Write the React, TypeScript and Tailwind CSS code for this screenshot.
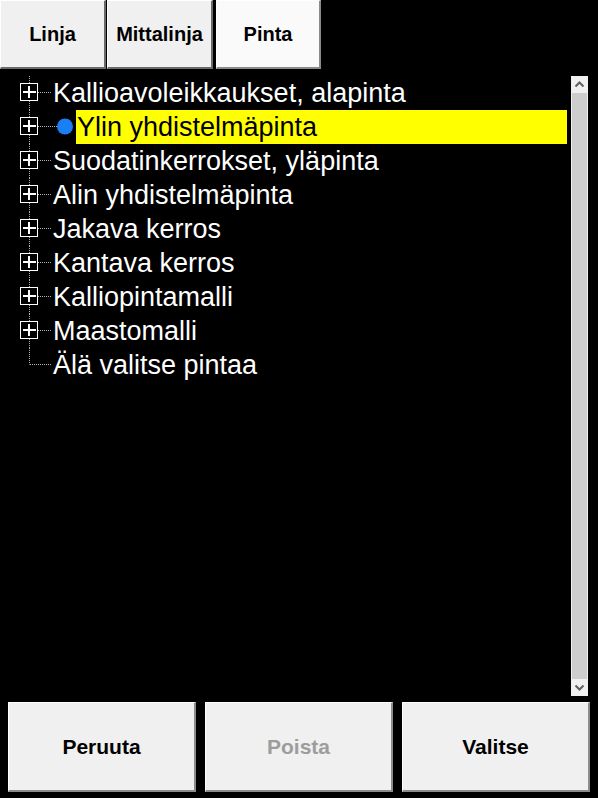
import React from "react";

const items = [
  { label: "Kallioavoleikkaukset, alapinta", box: true },
  { label: "Ylin yhdistelmäpinta", box: true, selected: true },
  { label: "Suodatinkerrokset, yläpinta", box: true },
  { label: "Alin yhdistelmäpinta", box: true },
  { label: "Jakava kerros", box: true },
  { label: "Kantava kerros", box: true },
  { label: "Kalliopintamalli", box: true },
  { label: "Maastomalli", box: true },
  { label: "Älä valitse pintaa", box: false, last: true },
];

const LINE = "#b0b0b0";

function Connector({ box, last, selected }: { box: boolean; last?: boolean; selected?: boolean }) {
  const w = selected ? 76 : 53;
  return (
    <svg width={w} height={34} className="shrink-0 block">
      {box ? (
        <>
          <line x1={29.5} y1={0} x2={29.5} y2={8} stroke={LINE} strokeDasharray="1 1" />
          <line x1={29.5} y1={25} x2={29.5} y2={34} stroke={LINE} strokeDasharray="1 1" />
          <line x1={38} y1={16.5} x2={selected ? 57 : 52} y2={16.5} stroke={LINE} strokeDasharray="1 1" />
          <rect x={20.5} y={7.5} width={17} height={17} fill="none" stroke="#ffffff" strokeWidth={1} />
          <rect x={23} y={15} width={13} height={2} fill="#ffffff" />
          <rect x={28} y={10} width={2} height={12} fill="#ffffff" />
        </>
      ) : (
        <>
          <line x1={29.5} y1={0} x2={29.5} y2={last ? 16.5 : 34} stroke={LINE} strokeDasharray="1 1" />
          <line x1={30} y1={16.5} x2={52} y2={16.5} stroke={LINE} strokeDasharray="1 1" />
        </>
      )}
      {selected && <circle cx={65} cy={16.5} r={8} fill="#1a7ff5" />}
    </svg>
  );
}

function Tab({ label, active, className }: { label: string; active?: boolean; className: string }) {
  return (
    <div
      className={
        "flex items-center justify-center h-full font-bold text-[20px] text-black border-t border-l border-r-2 border-b-2 " +
        (active
          ? "bg-[#fafafa] border-t-[#ffffff] border-l-[#ffffff] border-r-[#8a8a8a] border-b-[#8a8a8a] "
          : "bg-[#f0f0f0] border-t-[#ffffff] border-l-[#ffffff] border-r-[#6a6a6a] border-b-[#6a6a6a] ") +
        className
      }
    >
      {label}
    </div>
  );
}

function BottomButton({ label, disabled }: { label: string; disabled?: boolean }) {
  return (
    <div
      className={
        "w-[188px] h-full flex items-center justify-center bg-[#f0f0f0] font-bold text-[21px] border-t border-l border-r-2 border-b-2 border-t-[#ffffff] border-l-[#ffffff] border-r-[#8c8c8c] border-b-[#8c8c8c] " +
        (disabled ? "text-[#9d9d9d]" : "text-black")
      }
    >
      {label}
    </div>
  );
}

export default function App() {
  return (
    <div
      className="w-[598px] h-[798px] bg-black flex flex-col overflow-hidden"
      style={{ fontFamily: '"Liberation Sans", Arial, sans-serif' }}
    >
      <div className="h-[69px] flex shrink-0">
        <Tab label="Linja" className="w-[106px]" />
        <div className="w-[1px]" />
        <Tab label="Mittalinja" className="w-[106px]" />
        <div className="w-[3px]" />
        <Tab label="Pinta" active className="w-[105px]" />
      </div>
      <div className="h-[6px] shrink-0" />
      <div className="h-[622px] flex shrink-0">
        <div className="flex-1 flex flex-col pt-[1px] pr-[4px]">
          {items.map((it) => (
            <div key={it.label} className="h-[34px] flex items-center">
              <Connector box={it.box} last={it.last} selected={it.selected} />
              {it.selected ? (
                <div className="flex-1 h-[34px] bg-[#ffff00] text-black text-[27px] leading-[34px] pl-[1px] whitespace-nowrap">
                  {it.label}
                </div>
              ) : (
                <div className="text-white text-[27px] leading-[34px] whitespace-nowrap">{it.label}</div>
              )}
            </div>
          ))}
        </div>
        <div className="w-[17px] mt-[1px] mb-[1px] bg-[#f0f0f0] flex flex-col">
          <div className="h-[17px] flex items-center justify-center shrink-0">
            <svg width={17} height={17}>
              <polyline points="4.5,10.5 8.5,6.5 12.5,10.5" fill="none" stroke="#606060" strokeWidth={2} />
            </svg>
          </div>
          <div className="flex-1 mx-[1px] bg-[#cdcdcd]" />
          <div className="h-[17px] flex items-center justify-center shrink-0">
            <svg width={17} height={17}>
              <polyline points="4.5,6.5 8.5,10.5 12.5,6.5" fill="none" stroke="#606060" strokeWidth={2} />
            </svg>
          </div>
        </div>
        <div className="w-[10px]" />
      </div>
      <div className="h-[5px] shrink-0" />
      <div className="h-[90px] flex gap-[9px] px-[8px] shrink-0">
        <BottomButton label="Peruuta" />
        <BottomButton label="Poista" disabled />
        <BottomButton label="Valitse" />
      </div>
    </div>
  );
}
